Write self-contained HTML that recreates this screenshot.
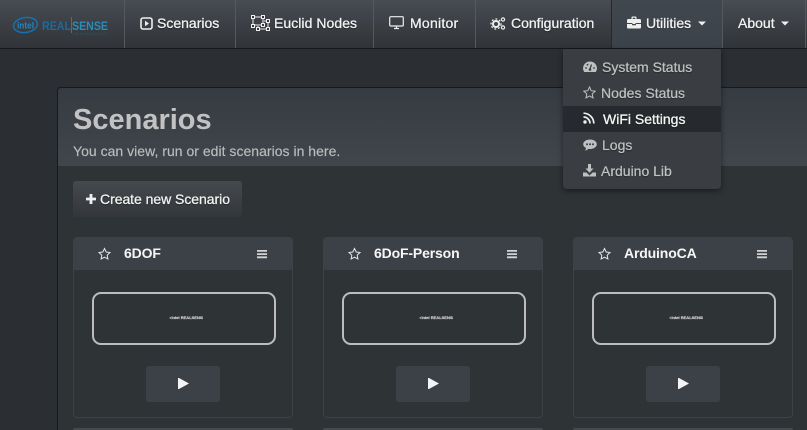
<!DOCTYPE html>
<html><head><meta charset="utf-8"><style>
*{box-sizing:border-box}
html,body{margin:0;padding:0;width:807px;height:430px;overflow:hidden}
body{background:#2b2e32;font-family:"Liberation Sans",sans-serif;position:relative;font-size:14px}
#w{position:absolute;left:0;top:0;width:807px;height:430px;overflow:hidden}
.abs,.t,.nav,.sep,svg.i{position:absolute}
.nav{left:0;top:0;width:807px;height:49px;background:linear-gradient(#484c53,#303337);border-bottom:1px solid #17191b}
.sep{top:0;width:1px;height:48px;background:#55585d}
.t{white-space:nowrap;line-height:20px}
.n{color:#f2f2f2;text-shadow:0 1px 1px rgba(0,0,0,.6);top:13px;-webkit-text-stroke:.3px #f2f2f2}
.panel{position:absolute;left:57px;top:87px;width:750px;height:343px;background:#2e3336;border:1px solid #17191b;border-right:0;border-bottom:0;border-radius:4px 0 0 0;overflow:hidden}
.phead{position:absolute;left:0;top:0;right:0;height:78px;background:linear-gradient(#363b41,#41464d)}
.card{position:absolute;top:237px;width:220px;height:181px;background:#2e3336;border:1px solid #3e4145;border-radius:4px;overflow:hidden}
.ch{position:absolute;left:-1px;top:-1px;width:220px;height:33px;background:#3c4148}
.title{position:absolute;left:50px;top:5px;line-height:20px;color:#f6f6f6;font-size:14px;font-weight:bold;letter-spacing:-.15px}
.frame{position:absolute;left:18px;top:54px;width:184px;height:53px;border:2px solid #bdbdbd;border-radius:9px}
.mini{position:absolute;left:75px;top:20px;width:34px;height:8px;font-size:4px;line-height:8px;color:#d8d8d8;font-weight:bold;white-space:nowrap;text-align:center;overflow:hidden;-webkit-text-stroke:.15px #d8d8d8}
.play{position:absolute;left:72px;top:128px;width:74px;height:36px;background:#3c4148;border-radius:3px}
.dd{position:absolute;left:563px;top:49px;width:158px;height:140px;background:#3a3e42;border-radius:0 0 4px 4px;box-shadow:0 2px 6px rgba(0,0,0,.45)}
.hover{position:absolute;left:0;top:57px;width:158px;height:26px;background:#26292d}
.d{color:#c0c0c0;text-shadow:0 1px 1px rgba(0,0,0,.5);-webkit-text-stroke:.25px #c0c0c0}
</style></head><body><div id="w">
<div class="panel"><div class="phead"></div></div>
<div class="t" style="left:73px;top:102px;font-size:29px;line-height:36px;font-weight:bold;color:#c2c2c2">Scenarios</div>
<div class="t" style="left:73px;top:141px;font-size:14px;color:#bcbcbc;letter-spacing:.02px;-webkit-text-stroke:.15px #bcbcbc">You can view, run or edit scenarios in here.</div>
<div class="abs" style="left:73px;top:181px;width:169px;height:36px;background:linear-gradient(#46494f,#33363a);border-radius:3px"></div>
<svg class="i" style="left:85px;top:193px" width="12" height="12" viewBox="0 0 12 12"><path d="M4.600 1h2.800v3.600h3.600v2.800h-3.600v3.600h-2.800v-3.600h-3.600v-2.800h3.600z" fill="#f0f0f0"/></svg>
<div class="t" style="left:100px;top:189px;color:#f2f2f2;text-shadow:0 1px 1px rgba(0,0,0,.6);-webkit-text-stroke:.3px #f2f2f2;letter-spacing:-.04px">Create new Scenario</div>

<div class="card" style="left:73px"><div class="ch"></div><div class="title">6DOF</div><div class="frame"><div class="mini">◖intel REALSENSE</div></div><div class="play"></div></div>
<div class="card" style="left:323px"><div class="ch"></div><div class="title">6DoF-Person</div><div class="frame"><div class="mini">◖intel REALSENSE</div></div><div class="play"></div></div>
<div class="card" style="left:573px"><div class="ch"></div><div class="title">ArduinoCA</div><div class="frame"><div class="mini">◖intel REALSENSE</div></div><div class="play"></div></div>
<div class="abs" style="left:73px;top:428px;width:220px;height:2px;background:#45484c;border-radius:4px 4px 0 0"></div>
<div class="abs" style="left:323px;top:428px;width:220px;height:2px;background:#45484c;border-radius:4px 4px 0 0"></div>
<div class="abs" style="left:573px;top:428px;width:220px;height:2px;background:#45484c;border-radius:4px 4px 0 0"></div>

<svg class="i" style="left:0;top:237px" width="807" height="193" viewBox="0 237 807 193">
<g fill="none" stroke="#e6e6e6" stroke-width="1">
<path d="M104.500 248.500l1.700 3.500 3.800.5-2.800 2.700.7 3.800-3.400-1.800-3.400 1.800.7-3.800-2.800-2.700 3.800-.5z"/>
<path d="M354.500 248.500l1.700 3.500 3.800.5-2.800 2.700.7 3.800-3.400-1.800-3.400 1.800.7-3.800-2.800-2.700 3.800-.5z"/>
<path d="M604.500 248.500l1.700 3.500 3.800.5-2.800 2.700.7 3.800-3.400-1.800-3.400 1.800.7-3.800-2.800-2.700 3.800-.5z"/>
</g>
<g fill="#d2d2d2">
<path d="M257 250h10v1.800h-10zM257 253.200h10v1.800h-10zM257 256.400h10v1.800h-10z"/>
<path d="M507 250h10v1.800h-10zM507 253.200h10v1.800h-10zM507 256.400h10v1.800h-10z"/>
<path d="M757 250h10v1.800h-10zM757 253.200h10v1.800h-10zM757 256.400h10v1.800h-10z"/>
</g>
<g fill="#f4f4f4">
<path d="M178 378h1l10 5.500-10 5.500h-1z"/>
<path d="M428 378h1l10 5.500-10 5.500h-1z"/>
<path d="M678 378h1l10 5.500-10 5.500h-1z"/>
</g>
</svg>

<div class="nav"></div>
<div class="abs" style="left:611px;top:0;width:111px;height:48px;background:linear-gradient(#41474e,#3b4249)"></div>
<div class="sep" style="left:124px"></div><div class="sep" style="left:235px"></div><div class="sep" style="left:373px"></div><div class="sep" style="left:475px"></div><div class="sep" style="left:611px;background:#26292c"></div><div class="sep" style="left:722px"></div><div class="sep" style="left:805px"></div>

<svg class="i" style="left:10px;top:12px" width="110" height="26" viewBox="0 0 110 26">
<ellipse cx="15.500" cy="13" rx="12" ry="7.500" fill="none" stroke="#1672ae" stroke-width="1.500" transform="rotate(-8 15.500 13)"/>
<text x="7" y="16.500" font-family="Liberation Sans" font-size="9.500" font-weight="bold" fill="#2185c2" textLength="17" lengthAdjust="spacingAndGlyphs">intel</text>
<text x="32" y="18" font-family="Liberation Sans" font-size="12" font-weight="bold" fill="#1a6a9e" textLength="29" lengthAdjust="spacingAndGlyphs">REAL</text>
<text x="62" y="18" font-family="Liberation Sans" font-size="12" font-weight="bold" fill="#2a8cb8" textLength="36" lengthAdjust="spacingAndGlyphs">SENSE</text>
<rect x="61" y="5" width="1" height="16" fill="#1c7fb0"/>
<text x="63" y="23" font-family="Liberation Sans" font-size="3" fill="#1a6a8e" textLength="34">TECHNOLOGY</text>
</svg>

<svg class="i" style="left:140px;top:17px" width="13" height="13" viewBox="0 0 13 13"><rect x="1" y="1" width="11" height="11" rx="2" fill="none" stroke="#eee" stroke-width="1.600"/><path d="M5 3.800l4 2.700-4 2.700z" fill="#eee"/></svg>
<div class="t n" style="left:157px">Scenarios</div>
<svg class="i" style="left:251px;top:15px" width="19" height="16" viewBox="0 0 19 16" fill="none" stroke="#eee"><path d="M2 2h10v8h-10zM13 6h4v8h-10v-3"/><g fill="#34373b" stroke-width="1"><rect x=".5" y=".5" width="3" height="3"/><rect x="10.500" y=".5" width="3" height="3"/><rect x=".5" y="9.500" width="3" height="3"/><rect x="15.500" y="4.500" width="3" height="3"/><rect x="15.500" y="12.500" width="3" height="3"/><rect x="5.500" y="12.500" width="3" height="3"/><rect x="10.500" y="8.500" width="3" height="3"/></g></svg>
<div class="t n" style="left:274px;letter-spacing:.05px">Euclid Nodes</div>
<svg class="i" style="left:389px;top:16px" width="15" height="14" viewBox="0 0 15 14" fill="none" stroke="#eee"><rect x=".7" y=".7" width="13.600" height="9.300" rx="1" stroke-width="1.200"/><path d="M5 12.500h5M7.500 10v2.500" stroke-width="1.200"/></svg>
<div class="t n" style="left:410px;letter-spacing:.25px">Monitor</div>
<svg class="i" style="left:490px;top:16px" width="16" height="15" viewBox="0 0 16 15"><circle cx="6" cy="8" r="3" fill="none" stroke="#eee" stroke-width="2"/><circle cx="6" cy="8" r="5" fill="none" stroke="#eee" stroke-width="1.300" stroke-dasharray="1.800 2"/><circle cx="13" cy="3.500" r="1.600" fill="none" stroke="#eee" stroke-width="1.200"/><circle cx="13" cy="11.500" r="1.600" fill="none" stroke="#eee" stroke-width="1.200"/></svg>
<div class="t n" style="left:511px">Configuration</div>
<svg class="i" style="left:627px;top:16px" width="14" height="13" viewBox="0 0 14 13"><path d="M4.500 3V1.500q0-1 1-1h3q1 0 1 1V3h3q1.500 0 1.500 1.500V7H8.500v1h-3V7H0V4.500Q0 3 1.500 3zM5.700 3h2.600V1.700H5.700zM0 8h5v1.200h4V8h5v3.500q0 1-1 1H1q-1 0-1-1z" fill="#eee"/></svg>
<div class="t n" style="left:646px">Utilities</div>
<svg class="i" style="left:698px;top:21px" width="8" height="5" viewBox="0 0 8 5"><path d="M0 .5h8l-4 4z" fill="#eee"/></svg>
<div class="t n" style="left:738px">About</div>
<svg class="i" style="left:781px;top:21px" width="8" height="5" viewBox="0 0 8 5"><path d="M0 .5h8l-4 4z" fill="#eee"/></svg>

<div class="dd"><div class="hover"></div></div>
<svg class="i" style="left:583px;top:61px" width="14" height="12" viewBox="0 0 14 12"><path d="M7 .5a6.800 6.800 0 0 0-5.800 10.500h11.600A6.800 6.800 0 0 0 7 .5z" fill="#c0c0c0"/><path d="M7 8l1.500-4.500" stroke="#3a3e42" stroke-width="1.200"/><g fill="#3a3e42"><circle cx="3" cy="7" r=".9"/><circle cx="4.500" cy="3.700" r=".9"/><circle cx="11" cy="7" r=".9"/><circle cx="7" cy="8.500" r="1.300"/></g></svg>
<div class="t d" style="left:602px;top:57px">System Status</div>
<svg class="i" style="left:583px;top:86px" width="13" height="13" viewBox="0 0 13 13"><path d="M6.500 1l1.700 3.700 4 .5-3 2.700.8 4-3.500-2-3.500 2 .8-4-3-2.700 4-.5z" fill="none" stroke="#c0c0c0"/></svg>
<div class="t d" style="left:601px;top:83px">Nodes Status</div>
<svg class="i" style="left:583px;top:112px" width="12" height="12" viewBox="0 0 12 12"><g fill="none" stroke="#eee" stroke-width="1.700"><path d="M.5 1.200a10.300 10.300 0 0 1 10.300 10.300"/><path d="M.5 5a6.500 6.500 0 0 1 6.500 6.500"/></g><circle cx="2" cy="10" r="1.700" fill="#eee"/></svg>
<div class="t" style="left:603px;top:109px;color:#f6f6f6;text-shadow:0 1px 1px rgba(0,0,0,.6);-webkit-text-stroke:.3px #f6f6f6">WiFi Settings</div>
<svg class="i" style="left:583px;top:139px" width="14" height="12" viewBox="0 0 14 12"><path d="M7 .5c3.800 0 6.800 2.100 6.800 4.700S10.800 10 7 10c-.6 0-1.100 0-1.600-.1C4.400 11 3 11.500 1.800 11.500c.7-.7 1.200-1.600 1.300-2.500C1.300 8.100.2 6.700.2 5.200.2 2.600 3.200.5 7 .5z" fill="#c0c0c0"/><g fill="#3a3e42"><circle cx="4" cy="5.200" r="1"/><circle cx="7" cy="5.200" r="1"/><circle cx="10" cy="5.200" r="1"/></g></svg>
<div class="t d" style="left:602px;top:135px">Logs</div>
<svg class="i" style="left:583px;top:164px" width="13" height="13" viewBox="0 0 13 13"><path d="M5 0h3v4.500h2.500L6.500 8.700 2.500 4.500H5zM0 8.500h3.500l3 3 3-3H13V12.500H0z" fill="#c0c0c0"/></svg>
<div class="t d" style="left:601px;top:161px">Arduino Lib</div>
</div></body></html>
